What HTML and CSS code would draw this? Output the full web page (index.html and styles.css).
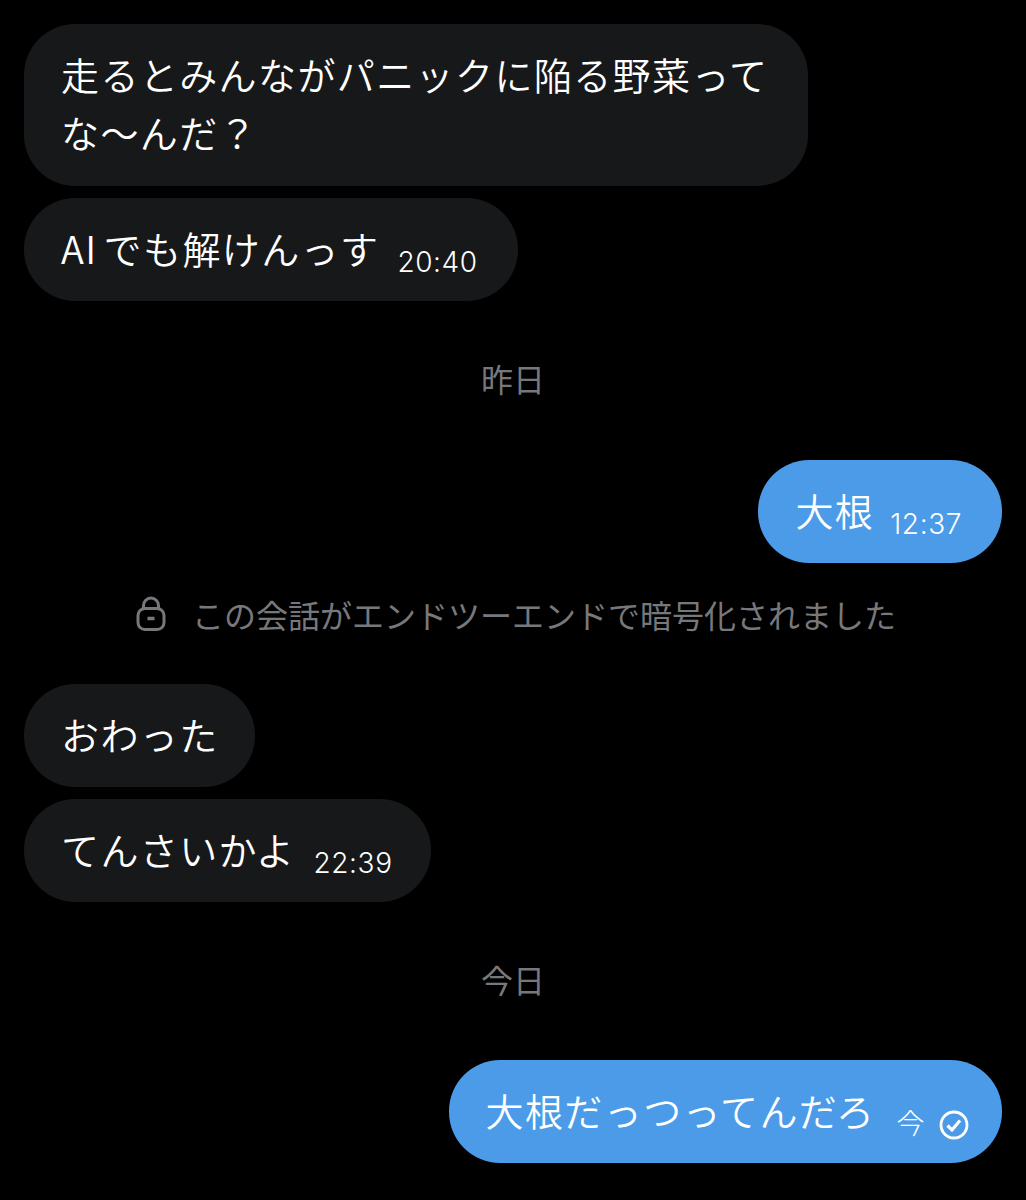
FILE: index.html
```html
<!DOCTYPE html>
<html lang="ja">
<head>
<meta charset="UTF-8">
<title>メッセージ</title>
<link rel="stylesheet" href="styles.css">
</head>
<body>
<div class="chat">
	<div class="msg in first">走るとみんながパニックに陥る野菜って<br>な〜んだ？</div>
	<div class="msg in next"><span class="latin">AI</span>でも解けんっす<span class="time far">20:40</span></div>

	<div class="day day_1">昨日</div>

	<div class="msg out">大根<span class="time">12:37</span></div>

	<div class="notice">
		<svg class="lock" width="30" height="36" viewBox="0 0 30 36" fill="none" stroke="#77787c" stroke-width="3">
			<path d="M7.5 13V9.5a7.5 7.5 0 0 1 15 0V13"/>
			<rect x="2" y="12.500" width="26" height="21" rx="7"/>
			<path d="M11.500 22.500h7" stroke-width="3.500"/>
		</svg>
		<span>この会話がエンドツーエンドで暗号化されました</span>
	</div>

	<div class="msg in short">おわった</div>
	<div class="msg in next">てんさいかよ<span class="time tight">22:39</span></div>

	<div class="day day_2">今日</div>

	<div class="msg out">大根だっつってんだろ<span class="time now">今</span>
		<svg class="check" width="30" height="30" viewBox="0 0 30 30" fill="none" stroke="#fff">
			<circle cx="15" cy="15" r="13" stroke-width="2.800"/>
			<path d="M8.500 15.500l4.500 4.500 8-9.500" stroke-width="3.200"/>
		</svg>
	</div>
</div>
</body>
</html>
```

FILE: styles.css
```css
*{margin:0;padding:0;box-sizing:border-box;}
html,body{background:#000;}
body{height:1200px;overflow:hidden;font-family:"Noto Sans CJK JP","Liberation Sans",sans-serif;}
.chat{display:flex;flex-direction:column;align-items:flex-start;padding:24px 24px 0;}
.msg{display:flex;align-items:flex-start;min-height:103px;padding:21px 38px 23px 37px;border-radius:51px;font-size:38px;font-weight:350;line-height:58px;letter-spacing:1.400px;color:#fff;}
.in{background:#17181a;}
.first{display:block;width:784px;height:162px;}
.short{padding-right:36px;}
.next{margin-top:12px;}
.latin{margin-right:6px;}
.out{align-self:flex-end;background:#4c9be8;}
.time{margin:27px 2px 0 16px;font-family:"Inter","Noto Sans CJK JP",sans-serif;font-size:28px;font-weight:300;line-height:32px;letter-spacing:.6px;}
.far{margin-left:18px;}
.tight{margin-left:18px;margin-right:0;}
.now{margin-left:21px;margin-right:0;}
.day{align-self:center;font-size:32px;line-height:44px;color:#77787c;}
.day_1{margin:55px 0 60px;}
.day_2{margin:55px 0 59px;}
.notice{display:flex;align-items:center;align-self:flex-start;gap:26px;margin:29px 0 48px 112px;font-size:32px;line-height:44px;color:#77787c;}
.lock{flex:none;}
.check{margin:29px -5px 0 14px;}
```
